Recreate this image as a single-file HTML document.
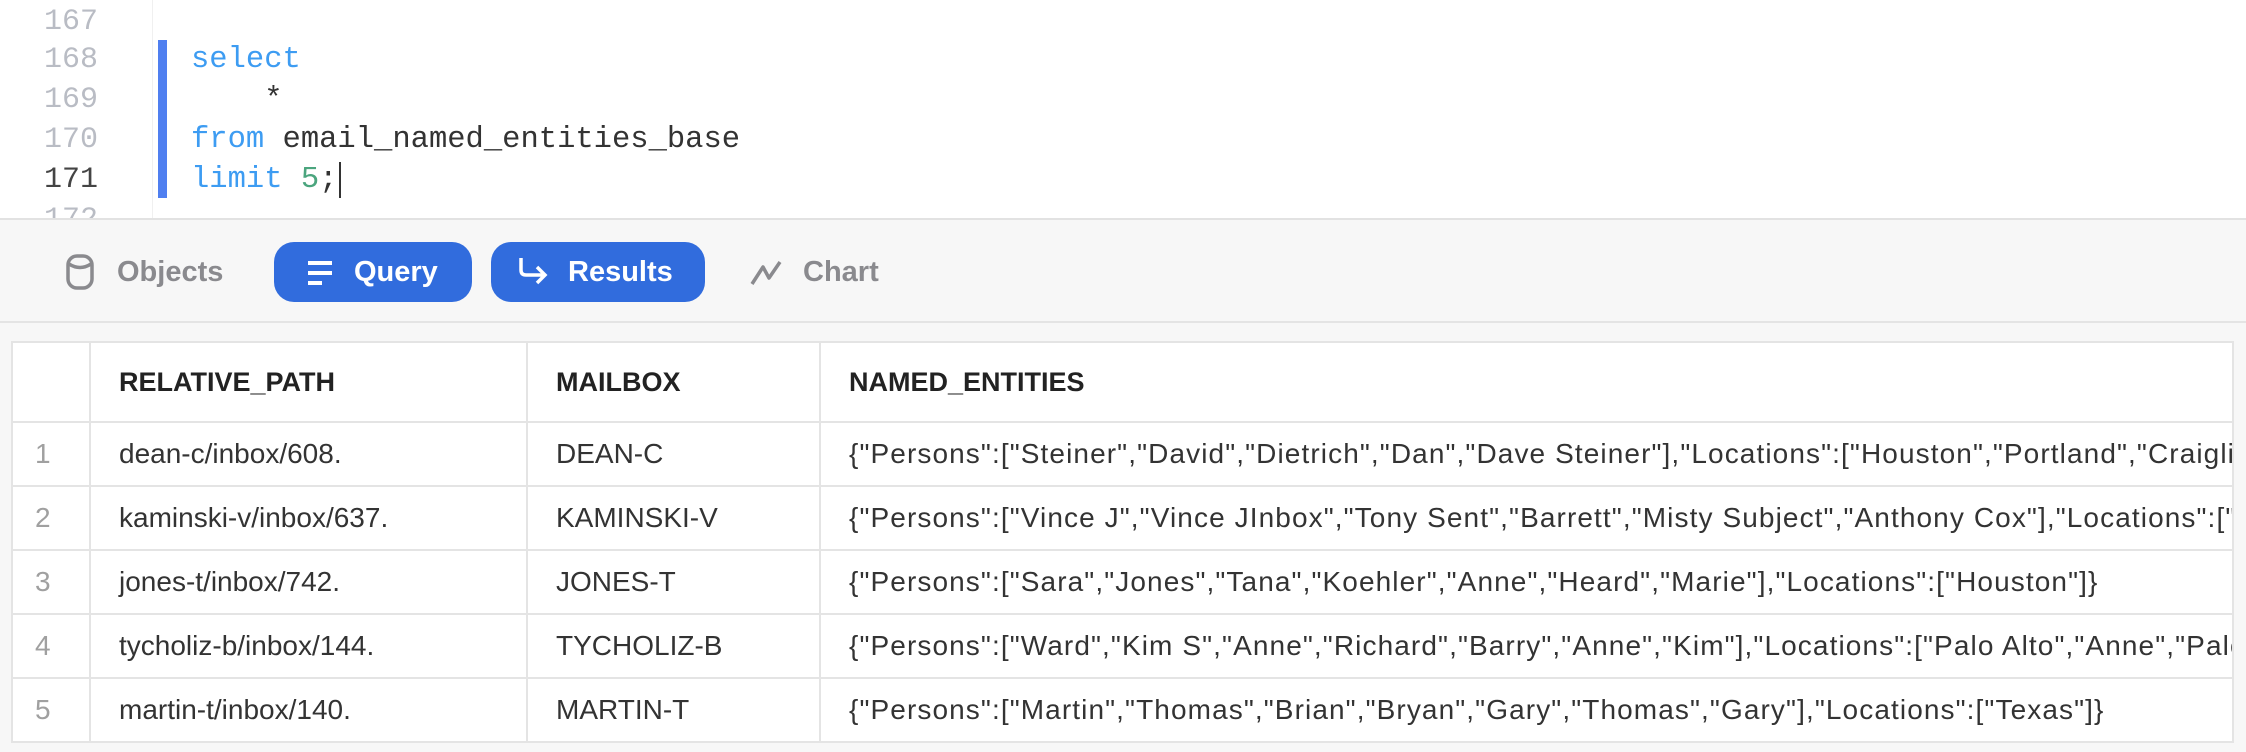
<!DOCTYPE html>
<html><head><meta charset="utf-8"><style>
*{margin:0;padding:0;box-sizing:border-box}
body{width:2246px;height:752px;background:#f7f7f7;position:relative;overflow:hidden;font-family:"Liberation Sans",sans-serif}
.editor{position:absolute;left:0;top:0;width:2246px;height:220px;background:#fff;border-bottom:2px solid #e2e2e2;overflow:hidden}
.gut{position:absolute;left:152px;top:0;width:1px;height:220px;background:#f0f0f0}
.ln{position:absolute;left:44px;width:52px;font:30px "Liberation Mono",monospace;color:#b9bcc4;line-height:40px;text-align:left}
.code{position:absolute;left:191px;font:30.5px "Liberation Mono",monospace;line-height:40px;color:#333;white-space:pre}
.kw{color:#3d9cf2}.num{color:#4ba57e}
.bar{position:absolute;left:158px;top:40px;width:9px;height:158px;background:#4f7ff0}
.tb{position:absolute;top:222px;left:0;width:2246px;height:101px;background:#f7f7f7;border-bottom:2px solid #e4e4e4}
.btn{position:absolute;top:242px;height:60px;border-radius:20px;background:#316cdd;color:#fff;font:bold 29px "Liberation Sans",sans-serif;line-height:60px}
.lbl{position:absolute;top:242px;font:bold 29px "Liberation Sans",sans-serif;line-height:60px;color:#8a8a8e}
table{position:absolute;left:11px;top:341px;width:2223px;border-collapse:collapse;background:#fff;table-layout:fixed}
td,th{border:2px solid #e4e4e4;font-size:28px;color:#333;text-align:left;white-space:nowrap;overflow:hidden;padding-left:28px;height:64px}
th{height:80px;font-weight:bold;color:#222;font-size:27px}
td.n{color:#a0a0a0;padding-left:22px}
td.j{letter-spacing:1.1px}
</style></head><body>
<div class="editor">
<div class="gut"></div>
<div class="ln" style="top:2px">167</div>
<div class="ln" style="top:40px">168</div>
<div class="ln" style="top:80px">169</div>
<div class="ln" style="top:120px">170</div>
<div class="ln" style="top:160px;color:#444">171</div>
<div class="ln" style="top:200px">172</div>
<div class="bar"></div>
<div class="code" style="top:40px"><span class="kw">select</span></div>
<div class="code" style="top:80px">    *</div>
<div class="code" style="top:120px"><span class="kw">from</span> email_named_entities_base</div>
<div class="code" style="top:160px"><span class="kw">limit</span> <span class="num">5</span>;</div>
<div style="position:absolute;left:339px;top:162px;width:2px;height:36px;background:#333"></div>
</div>
<div class="tb"></div>
<svg style="position:absolute;left:66px;top:254px" width="28" height="36" viewBox="0 0 28 36"><rect x="2" y="2" width="24" height="32" rx="9" fill="none" stroke="#8a8a8e" stroke-width="3.5"/><path d="M3 10 Q14 17 25 10" fill="none" stroke="#8a8a8e" stroke-width="3.5"/></svg>
<div class="lbl" style="left:117px">Objects</div>
<div class="btn" style="left:274px;width:198px"><svg style="position:absolute;left:32px;top:17px" width="28" height="28" viewBox="0 0 28 28"><rect x="2" y="2" width="24" height="4" fill="#fff"/><rect x="2" y="12" width="24" height="4" fill="#fff"/><rect x="2" y="22" width="14" height="4" fill="#fff"/></svg><span style="position:absolute;left:80px">Query</span></div>
<div class="btn" style="left:491px;width:214px"><svg style="position:absolute;left:26px;top:14px" width="34" height="32" viewBox="0 0 34 32"><path d="M4 2 V14 Q4 19 9 19 H28 M20 11 L28 19 L20 27" fill="none" stroke="#fff" stroke-width="3.5"/></svg><span style="position:absolute;left:77px">Results</span></div>
<svg style="position:absolute;left:749px;top:258px" width="34" height="30" viewBox="0 0 34 30"><path d="M3 26 L14 9 L20 20 L31 4" fill="none" stroke="#8a8a8e" stroke-width="3.5" stroke-linejoin="round"/></svg>
<div class="lbl" style="left:803px">Chart</div>
<table>
<colgroup><col style="width:78px"><col style="width:437px"><col style="width:293px"><col></colgroup>
<tr><th></th><th>RELATIVE_PATH</th><th>MAILBOX</th><th>NAMED_ENTITIES</th></tr>
<tr><td class="n">1</td><td>dean-c/inbox/608.</td><td>DEAN-C</td><td class="j">{"Persons":["Steiner","David","Dietrich","Dan","Dave Steiner"],"Locations":["Houston","Portland","Craiglist","Dallas"]}</td></tr>
<tr><td class="n">2</td><td>kaminski-v/inbox/637.</td><td>KAMINSKI-V</td><td class="j">{"Persons":["Vince J","Vince JInbox","Tony Sent","Barrett","Misty Subject","Anthony Cox"],"Locations":["Houston"]}</td></tr>
<tr><td class="n">3</td><td>jones-t/inbox/742.</td><td>JONES-T</td><td class="j">{"Persons":["Sara","Jones","Tana","Koehler","Anne","Heard","Marie"],"Locations":["Houston"]}</td></tr>
<tr><td class="n">4</td><td>tycholiz-b/inbox/144.</td><td>TYCHOLIZ-B</td><td class="j">{"Persons":["Ward","Kim S","Anne","Richard","Barry","Anne","Kim"],"Locations":["Palo Alto","Anne","Palo Alto"]}</td></tr>
<tr><td class="n">5</td><td>martin-t/inbox/140.</td><td>MARTIN-T</td><td class="j">{"Persons":["Martin","Thomas","Brian","Bryan","Gary","Thomas","Gary"],"Locations":["Texas"]}</td></tr>
</table>
</body></html>
